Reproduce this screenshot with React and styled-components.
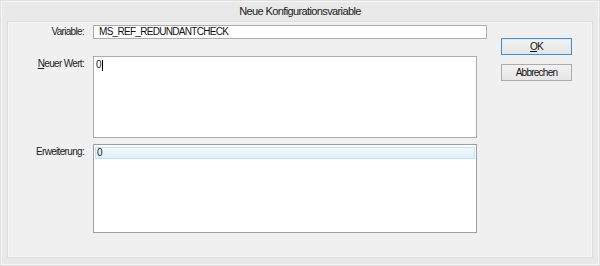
import React from "react";
import styled, { createGlobalStyle } from "styled-components";

const GlobalStyle = createGlobalStyle`
  html, body {
    margin: 0;
    padding: 0;
    background: #e9e9e9;
  }
`;

const FONT = `"Liberation Sans", Arial, sans-serif`;

function App() {
  return (
    <>
      <GlobalStyle />
      <Window>
        <TitleBar>Neue Konfigurationsvariable</TitleBar>
        <Client>
          <Form>
            <FieldRow>
              <Label>Variable:</Label>
              <TextBox>MS_REF_REDUNDANTCHECK</TextBox>
            </FieldRow>
            <FieldRow space={17}>
              <Label top={2}>
                <u>N</u>euer Wert:
              </Label>
              <TextArea>
                0<Caret />
              </TextArea>
            </FieldRow>
            <FieldRow space={6}>
              <Label top={2}>Erweiterung:</Label>
              <ListBox>
                <ListItem selected>0</ListItem>
              </ListBox>
            </FieldRow>
          </Form>
          <Buttons>
            <Button primary>
              <u>O</u>K
            </Button>
            <Button>Abbrechen</Button>
          </Buttons>
        </Client>
      </Window>
    </>
  );
}

export default App;

const Window = styled.div`
  width: 600px;
  height: 266px;
  box-sizing: border-box;
  display: flex;
  flex-direction: column;
  background: #e9e9e9;
  border: 1px solid #e0e0e0;
  box-shadow: inset 1px 1px 0 #f6f6f6, inset -1px -1px 0 #f6f6f6;
  font-family: ${FONT};
`;

const TitleBar = styled.div`
  height: 20px;
  display: flex;
  align-items: center;
  justify-content: center;
  font-size: 11px;
  letter-spacing: -0.62px;
  color: #1a1a1a;
`;

const Client = styled.div`
  flex: 1;
  margin: 0 6px 7px 6px;
  background: #f0f0f0;
  border: 1px solid #dedede;
  box-shadow: inset 0 0 0 1px #f5f5f5;
  display: flex;
  align-items: flex-start;
  padding-top: 3px;
`;

const Form = styled.div`
  display: flex;
  flex-direction: column;
`;

const FieldRow = styled.div`
  display: grid;
  grid-template-columns: 77px auto;
  column-gap: 8px;
  align-items: start;
  margin-top: ${(p) => p.space || 0}px;
`;

const Label = styled.div`
  font-size: 10px;
  letter-spacing: -0.68px;
  line-height: 12px;
  color: #222;
  text-align: right;
  padding-right: 1px;
  padding-top: ${(p) => (p.top !== undefined ? p.top : 1)}px;
`;

const TextBox = styled.div`
  width: 394px;
  height: 14px;
  box-sizing: border-box;
  background: #fff;
  border: 1px solid #acacac;
  font-size: 10px;
  letter-spacing: -0.7px;
  line-height: 12px;
  padding-left: 5px;
  color: #111;
`;

const TextArea = styled.div`
  width: 384px;
  height: 82px;
  box-sizing: border-box;
  background: #fff;
  border: 1px solid #acacac;
  font-size: 10px;
  line-height: 12px;
  padding: 2px 2px;
  color: #111;
  display: flex;
  align-items: flex-start;
`;

const Caret = styled.span`
  display: inline-block;
  width: 1px;
  height: 11px;
  margin-top: 1px;
  background: #000;
`;

const ListBox = styled.div`
  width: 384px;
  height: 89px;
  box-sizing: border-box;
  background: #fff;
  border: 1px solid #a0a0a0;
  padding: 2px 1px;
`;

const ListItem = styled.div`
  height: 12px;
  box-sizing: border-box;
  font-size: 10px;
  line-height: 10px;
  padding-left: 1px;
  color: #111;
  border: 1px solid ${(p) => (p.selected ? "#c2e2f5" : "transparent")};
  background: ${(p) =>
    p.selected ? "linear-gradient(#f1f9fe, #dcf0fb)" : "transparent"};
`;

const Buttons = styled.div`
  display: flex;
  flex-direction: column;
  gap: 9px;
  margin-left: 14px;
  margin-top: 13px;
`;

const Button = styled.div`
  width: 71px;
  height: 17px;
  box-sizing: border-box;
  display: flex;
  align-items: center;
  justify-content: center;
  font-size: 10px;
  letter-spacing: -0.75px;
  color: #111;
  border: 1px solid ${(p) => (p.primary ? "#4a8fcb" : "#acacac")};
  box-shadow: ${(p) => (p.primary ? "inset 0 0 0 1px #d6ebf9" : "none")};
  background: linear-gradient(#f2f2f2, #e6e6e6);
`;
